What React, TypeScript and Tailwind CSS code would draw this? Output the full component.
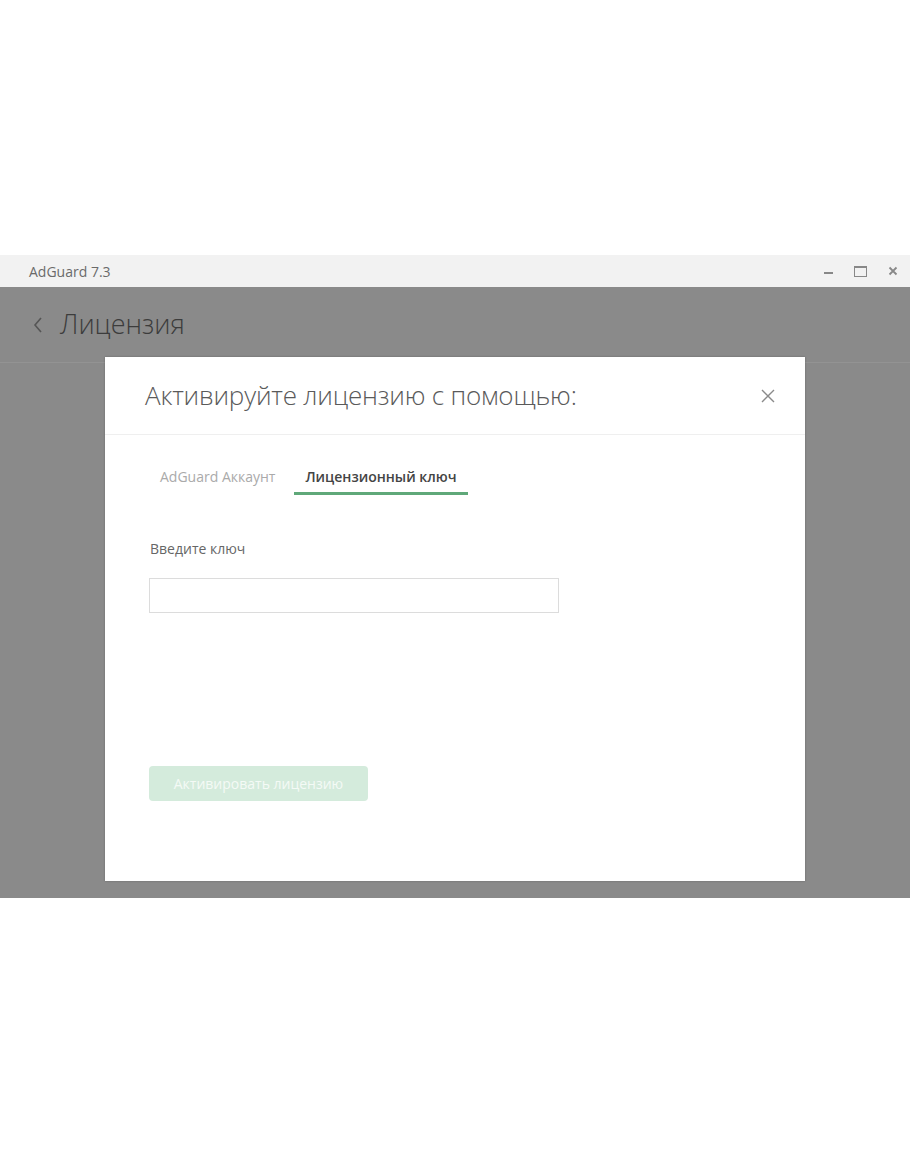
import { useState } from "react";

const font = { fontFamily: '"Open Sans", "Noto Sans", sans-serif' };

export default function App() {
  const [tab, setTab] = useState<"account" | "key">("key");
  const [key, setKey] = useState("");

  return (
    <div className="w-[910px] h-[1155px] bg-white flex flex-col" style={font}>
      <div className="h-[255px] shrink-0" />

      {/* window */}
      <div className="h-[643px] shrink-0 flex flex-col">
        {/* title bar */}
        <div className="h-[32px] bg-[#f2f2f2] flex items-center pl-[29px] pr-[10px]">
          <span className="text-[14px] text-[#6a6a6a]">AdGuard 7.3</span>
          <div className="ml-auto flex items-center gap-[21px] text-[#777]">
            <span className="w-[9px] h-[2px] bg-[#888] mt-[3px]" />
            <span className="w-[13px] h-[11px] border-[1.5px] border-[#888] border-t-[2.5px]" />
            <svg width="10" height="10" viewBox="0 0 10 10" className="mr-[2px]">
              <path d="M1.5 1.5 L8.5 8.5 M8.5 1.5 L1.5 8.5" stroke="#888" strokeWidth="1.8" />
            </svg>
          </div>
        </div>

        {/* content under overlay */}
        <div className="relative flex-1 bg-[#8a8a8a]">
          <div className="h-[76px] border-b border-[#939393] flex items-center pl-[32px] gap-[16px]">
            <svg width="12" height="20" viewBox="0 0 12 20">
              <path d="M9 3 L3 10 L9 17" fill="none" stroke="#555" strokeWidth="1.6" />
            </svg>
            <span className="text-[27px] font-light text-[#3c3c3c]">Лицензия</span>
          </div>

          {/* modal */}
          <div className="absolute left-[105px] top-[70px] w-[700px] h-[524px] bg-white shadow-[0_0_2px_rgba(0,0,0,0.25)] flex flex-col">
            <div className="h-[78px] border-b border-[#efefef] flex items-center pl-[40px] pr-[29px]">
              <h1 className="text-[26px] font-light text-[#5a5a5a] tracking-[-0.2px]">
                Активируйте лицензию с помощью:
              </h1>
              <button type="button" className="ml-auto">
                <svg width="16" height="16" viewBox="0 0 16 16">
                  <path d="M2 2 L14 14 M14 2 L2 14" stroke="#8a8a8a" strokeWidth="1.4" />
                </svg>
              </button>
            </div>

            <div className="flex gap-[14px] pl-[50px] pt-[31px] text-[14px]">
              <button
                type="button"
                onClick={() => setTab("account")}
                className={`px-[5px] pb-[5px] border-b-[3px] ${
                  tab === "account" ? "border-[#5fa879] font-semibold text-[#444]" : "border-transparent text-[#aaa]"
                }`}
              >
                AdGuard Аккаунт
              </button>
              <button
                type="button"
                onClick={() => setTab("key")}
                className={`px-[11px] pb-[5px] border-b-[3px] ${
                  tab === "key" ? "border-[#5fa879] font-semibold text-[#444]" : "border-transparent text-[#aaa]"
                }`}
              >
                Лицензионный ключ
              </button>
            </div>

            <div className="pl-[44px] pt-[43px] flex flex-col">
              <label className="text-[14px] text-[#666] pl-[1px]">Введите ключ</label>
              <input
                value={key}
                onChange={(e) => setKey(e.target.value)}
                className="mt-[19px] w-[410px] h-[35px] border border-[#dcdcdc] px-2 text-[14px] outline-none"
              />
            </div>

            <div className="pl-[44px] mt-[153px]">
              <button
                type="button"
                disabled={!key}
                className="w-[219px] h-[35px] rounded-[4px] bg-[#d4ebdc] text-[14px] text-[#f4faf6]"
              >
                Активировать лицензию
              </button>
            </div>
          </div>
        </div>
      </div>

      <div className="flex-1" />
    </div>
  );
}
